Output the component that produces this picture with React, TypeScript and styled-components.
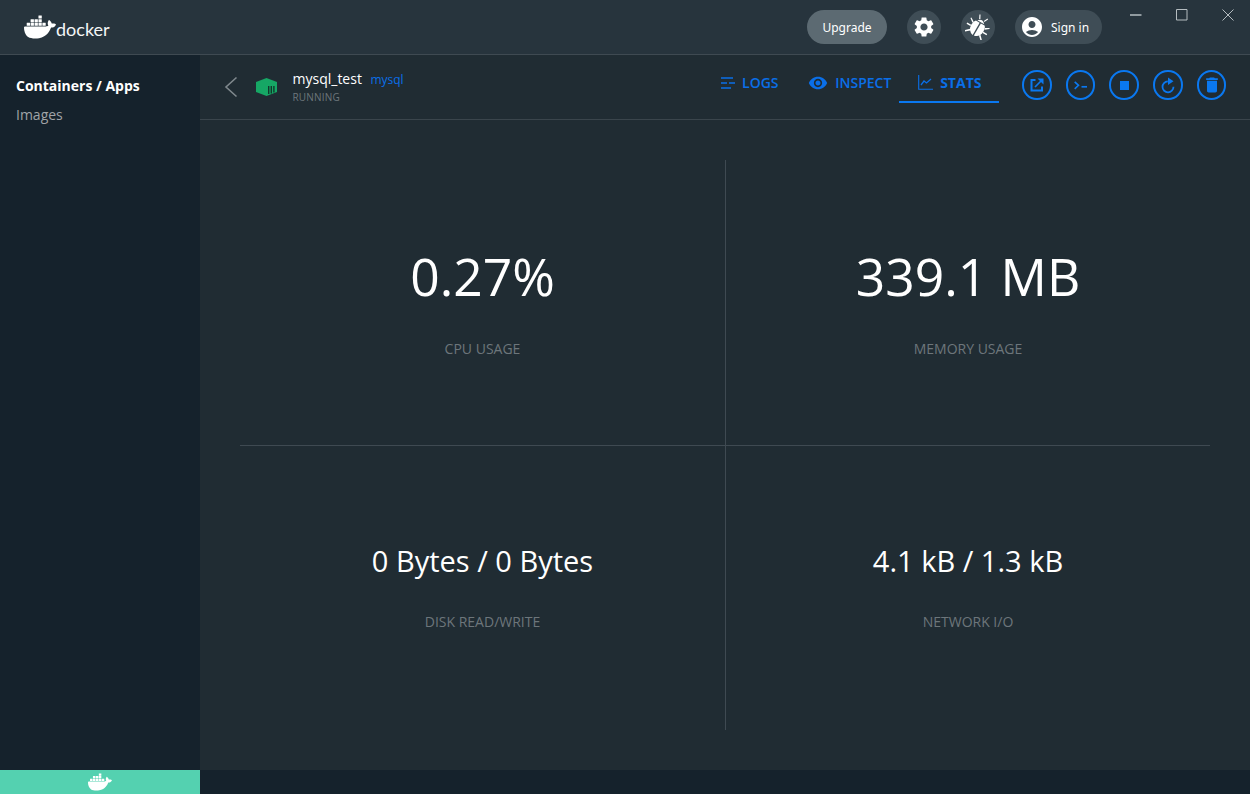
import React from "react";
import styled, { createGlobalStyle } from "styled-components";
import { SiDocker } from "react-icons/si";
import { MdAccountCircle, MdDelete, MdSettings, MdVisibility } from "react-icons/md";

const Global = createGlobalStyle`
  html, body { margin: 0; padding: 0; background: #202c33; }
  body { font-family: "Open Sans", "Noto Sans", sans-serif; }
`;

const Shell = styled.div`
  width: 1250px;
  height: 794px;
  display: grid;
  grid-template-rows: 55px 1fr 24px;
  grid-template-columns: 200px 1fr;
  overflow: hidden;
`;

const TitleBar = styled.header`
  grid-column: 1 / 3;
  background: #27343d;
  border-bottom: 1px solid #3f4a52;
  display: flex;
  align-items: flex-start;
  position: relative;
`;

const Logo = styled.div`
  display: flex;
  align-items: flex-end;
  margin: 16px 0 0 24px;
  color: #fff;
  height: 24px;
`;

const Wordmark = styled.span`
  font-family: "Lato", sans-serif;
  font-weight: 400;
  font-size: 18px;
  line-height: 21px;
  color: #f4f6f7;
`;

const TopActions = styled.div`
  margin-left: auto;
  margin-top: 10px;
  margin-right: 148px;
  display: flex;
  align-items: center;
  gap: 20px;
`;

const UpgradeButton = styled.button`
  width: 80px;
  height: 34px;
  border: 0;
  border-radius: 17px;
  background: #5c6a72;
  color: #fff;
  font: 400 12px "Noto Sans", sans-serif;
  padding: 0;
`;

const RoundButton = styled.button`
  width: 34px;
  height: 34px;
  border: 0;
  border-radius: 50%;
  background: #3f4d56;
  color: #fff;
  display: flex;
  align-items: center;
  justify-content: center;
  padding: 0;
`;

const SignIn = styled.button`
  width: 87px;
  height: 34px;
  border: 0;
  border-radius: 17px;
  background: #3f4d56;
  color: #fff;
  display: flex;
  align-items: center;
  gap: 7px;
  padding: 0 0 0 5px;
  font: 400 12px "Noto Sans", sans-serif;
`;

const WindowControls = styled.div`
  position: absolute;
  top: 9px;
  right: 16px;
  display: flex;
  align-items: center;
  gap: 34px;
  color: #b5bcc0;
`;

const Sidebar = styled.nav`
  background: #15222c;
  padding: 21px 16px;
  display: flex;
  flex-direction: column;
  gap: 9px;
`;

const NavItem = styled.a<{ $active?: boolean }>`
  font-size: 14px;
  line-height: 20px;
  font-weight: ${(p) => (p.$active ? 700 : 400)};
  color: ${(p) => (p.$active ? "#fff" : "#a0a4a7")};
`;

const Main = styled.main`
  background: #202c33;
  display: flex;
  flex-direction: column;
  min-height: 0;
`;

const SubHeader = styled.div`
  height: 64px;
  border-bottom: 1px solid #3a454c;
  display: flex;
  align-items: center;
  padding-left: 24px;
`;

const ContainerMeta = styled.div`
  margin-left: 14.500px;
  margin-bottom: 2px;
  display: flex;
  flex-direction: column;
`;

const NameRow = styled.div`
  display: flex;
  align-items: baseline;
  gap: 8.500px;
`;

const ContainerName = styled.span`
  color: #fff;
  font-size: 14px;
  line-height: 20px;
`;

const ImageLink = styled.span`
  color: #0a6fe8;
  font-size: 12px;
  line-height: 16px;
`;

const Status = styled.span`
  color: #6d767b;
  font-size: 10px;
  line-height: 14px;
  letter-spacing: 0.2px;
  margin-top: 1px;
`;

const Tabs = styled.div`
  margin-left: auto;
  display: flex;
  height: 100%;
`;

const Tab = styled.div<{ $active?: boolean }>`
  width: 100px;
  display: flex;
  align-items: center;
  justify-content: center;
  gap: 7px;
  color: #0a6fe8;
  font-size: 14px;
  position: relative;
  padding: 0 0 9px 1.500px;
  box-sizing: border-box;
  font-weight: ${(p) => (p.$active ? 700 : 600)};
  &::after {
    content: "";
    display: ${(p) => (p.$active ? "block" : "none")};
    position: absolute;
    left: 0;
    right: 0;
    bottom: 16px;
    height: 2px;
    background: #0a78f0;
  }
`;

const ActionRow = styled.div`
  display: flex;
  gap: 14.200px;
  margin-left: 23px;
  margin-right: 23.700px;
  padding-bottom: 4px;
`;

const ActionButton = styled.button`
  width: 29.500px;
  height: 29.500px;
  border: 2px solid #0a78f0;
  border-radius: 50%;
  background: transparent;
  color: #0a78f0;
  display: flex;
  align-items: center;
  justify-content: center;
  padding: 0;
`;

const StatsWrap = styled.div`
  flex: 1;
  padding: 40px 40px 40px;
  min-height: 0;
`;

const StatsGrid = styled.div`
  display: grid;
  grid-template-columns: 486px 484px;
  grid-template-rows: 286px 284px;
  height: 570px;
`;

const Cell = styled.div<{ $right?: boolean; $bottom?: boolean }>`
  display: flex;
  flex-direction: column;
  align-items: center;
  ${(p) => (p.$right ? "" : "border-right: 1px solid #3f4a52;")}
  ${(p) => (p.$bottom ? "" : "border-bottom: 1px solid #3f4a52;")}
  padding-top: ${(p) => (p.$bottom ? "95px" : "81px")};
  box-sizing: border-box;
`;

const Value = styled.div<{ $large?: boolean }>`
  color: #fff;
  font-size: ${(p) => (p.$large ? "51.600px" : "29px")};
  line-height: ${(p) => (p.$large ? "70px" : "40px")};
`;

const Label = styled.div<{ $large?: boolean }>`
  color: #6d767b;
  font-size: 14px;
  line-height: 20px;
  margin-top: ${(p) => (p.$large ? "28px" : "31px")};
`;

const BottomBar = styled.div`
  background: #54d1b0;
  display: flex;
  align-items: center;
  justify-content: center;
  color: #fff;
`;

const BottomRest = styled.div`
  background: #15222c;
`;

const App = () => (
  <>
    <Global />
    <Shell>
      <TitleBar>
        <Logo>
          <SiDocker size={32} style={{ marginBottom: -3 }} />
          <Wordmark>docker</Wordmark>
        </Logo>
        <TopActions>
          <UpgradeButton>Upgrade</UpgradeButton>
          <RoundButton aria-label="Settings">
            <MdSettings size={24} />
          </RoundButton>
          <RoundButton aria-label="Bug report">
            <svg width="26" height="26" viewBox="0 0 26 26" fill="currentColor">
              <g transform="rotate(30 13 13)">
                <path d="M12.300 8.500V22.500Q6.500 21.500 6 14.500Q6 10 8 8.500Z" />
                <path d="M13.700 8.500V22.500Q19.500 21.500 20 14.500Q20 10 18 8.500Z" />
                <path d="M9 7.500Q13 3 17 7.500Z" />
                <path d="M10 5.500L8 1.500L9 1L11 4.800Z M16 5.500L18 1.500L17 1L15 4.800Z" />
                <path d="M6.500 10.500L2.500 8L2 9L6 12Z M19.500 10.500L23.500 8L24 9L20 12Z" />
                <path d="M6 14.500H1.500V16H6Z M20 14.500H24.500V16H20Z" />
                <path d="M7 18.500L3 22.500L4 23.500L8 19.800Z M19 18.500L23 22.500L22 23.500L18 19.800Z" />
              </g>
            </svg>
          </RoundButton>
          <SignIn>
            <MdAccountCircle size={24} />
            Sign in
          </SignIn>
        </TopActions>
        <WindowControls>
          <svg width="12" height="12" viewBox="0 0 12 12"><path d="M0 6h11.500" stroke="currentColor" strokeWidth="1.5" /></svg>
          <svg width="12" height="12" viewBox="0 0 12 12"><path d="M.5.500h10.500v10.500H.5z" fill="none" stroke="currentColor" /></svg>
          <svg width="12" height="12" viewBox="0 0 12 12"><path d="M.5.500l11 11M11.500.500l-11 11" stroke="currentColor" /></svg>
        </WindowControls>
      </TitleBar>
      <Sidebar>
        <NavItem $active>Containers / Apps</NavItem>
        <NavItem>Images</NavItem>
      </Sidebar>
      <Main>
        <SubHeader>
          <svg width="14" height="22" viewBox="0 0 14 22" style={{ color: "#7f888d" }}>
            <path d="M12.500 1.500 L2 11 L12.500 20.500" fill="none" stroke="currentColor" strokeWidth="1.6" />
          </svg>
          <svg width="23" height="20" viewBox="0 0 23 20" style={{ marginLeft: 17 }}>
            <path d="M11.500 1 L22 5 V15 L11.500 19 L1 15 V5 Z" fill="#16a765" />
            <path d="M13 9h1.400v8H13zM15.600 9H17v7.500h-1.400zM18.200 9h1.400v6.500h-1.400z" fill="#11382c" />
          </svg>
          <ContainerMeta>
            <NameRow>
              <ContainerName>mysql_test</ContainerName>
              <ImageLink>mysql</ImageLink>
            </NameRow>
            <Status>RUNNING</Status>
          </ContainerMeta>
          <Tabs>
            <Tab>
              <svg width="14" height="12" viewBox="0 0 14 12">
                <path d="M0 1h12M0 6h6M8 6h6M0 11h10" stroke="currentColor" strokeWidth="1.5" fill="none" />
              </svg>
              LOGS
            </Tab>
            <Tab>
              <MdVisibility size={20} />
              INSPECT
            </Tab>
            <Tab $active>
              <svg width="15" height="15" viewBox="0 0 15 15">
                <path d="M.7 0v14.300H15" stroke="currentColor" strokeWidth="1.100" fill="none" />
                <path d="M3 10l3-4 2.500 2L13 4" stroke="currentColor" strokeWidth="1.300" fill="none" />
              </svg>
              STATS
            </Tab>
          </Tabs>
          <ActionRow>
            <ActionButton aria-label="Open in browser">
              <svg width="16" height="16" viewBox="0 0 16 16">
                <path d="M6.500 3H2.500v10.500H13V9.500" fill="none" stroke="currentColor" strokeWidth="2" />
                <path d="M6 10l6-6" stroke="currentColor" strokeWidth="1.700" />
                <path d="M8.500 1.500H14.500V7.500Z" fill="currentColor" />
              </svg>
            </ActionButton>
            <ActionButton aria-label="CLI">
              <svg width="14" height="9" viewBox="0 0 14 9">
                <path d="M.7.800L4.500 4.300.7 7.800" fill="none" stroke="currentColor" strokeWidth="1.600" />
                <path d="M7.500 5.800H13" stroke="currentColor" strokeWidth="1.700" />
              </svg>
            </ActionButton>
            <ActionButton aria-label="Stop">
              <svg width="9" height="9" viewBox="0 0 9 9"><path d="M0 0h9v9H0z" fill="currentColor" /></svg>
            </ActionButton>
            <ActionButton aria-label="Restart">
              <svg width="16" height="17" viewBox="0 0 16 17">
                <path d="M7.800 4.300A5.500 5.500 0 1 0 13.500 9.800" fill="none" stroke="currentColor" strokeWidth="1.800" />
                <path d="M8 0.500L13.500 4.300L8 8Z" fill="currentColor" />
              </svg>
            </ActionButton>
            <ActionButton aria-label="Delete">
              <MdDelete size={20} />
            </ActionButton>
          </ActionRow>
        </SubHeader>
        <StatsWrap>
          <StatsGrid>
            <Cell>
              <Value $large>0.27%</Value>
              <Label $large>CPU USAGE</Label>
            </Cell>
            <Cell $right>
              <Value $large>339.1 MB</Value>
              <Label $large>MEMORY USAGE</Label>
            </Cell>
            <Cell $bottom>
              <Value>0 Bytes / 0 Bytes</Value>
              <Label>DISK READ/WRITE</Label>
            </Cell>
            <Cell $right $bottom>
              <Value>4.1 kB / 1.3 kB</Value>
              <Label>NETWORK I/O</Label>
            </Cell>
          </StatsGrid>
        </StatsWrap>
      </Main>
      <BottomBar>
        <SiDocker size={24} />
      </BottomBar>
      <BottomRest />
    </Shell>
  </>
);

export default App;
